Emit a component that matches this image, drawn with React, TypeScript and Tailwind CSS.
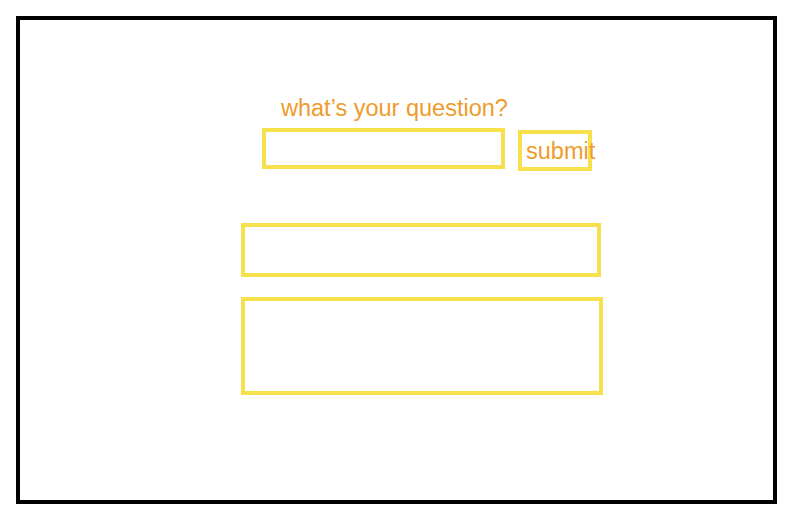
export default function App() {
  const font = { fontFamily: '"Liberation Sans", Arial, sans-serif' };
  return (
    <div className="w-[788px] h-[514px] bg-white p-4" style={font}>
      <div className="w-[761px] h-[488px] border-4 border-black flex flex-col pt-[74px]">
        <div className="ml-[261px] h-[28px] leading-[28px] text-[23.5px] text-[#ef9b2c] whitespace-nowrap">
          what’s your question?
        </div>
        <div className="flex items-start mt-[6px] ml-[242px]">
          <input
            type="text"
            className="w-[243px] h-[41px] border-4 border-[#f6e14c] bg-white outline-none"
          />
          <button
            type="button"
            className="ml-[13px] mt-[2px] w-[74px] h-[41px] border-4 border-[#f6e14c] flex items-center pl-[4px] pt-[2px] text-[23.5px] text-[#ef9b2c] whitespace-nowrap overflow-visible"
          >
            submit
          </button>
        </div>
        <div className="mt-[52px] ml-[221px] w-[360px] h-[54px] border-4 border-[#f6e14c]" />
        <div className="mt-[20px] ml-[221px] w-[362px] h-[98px] border-4 border-[#f6e14c]" />
      </div>
    </div>
  );
}
